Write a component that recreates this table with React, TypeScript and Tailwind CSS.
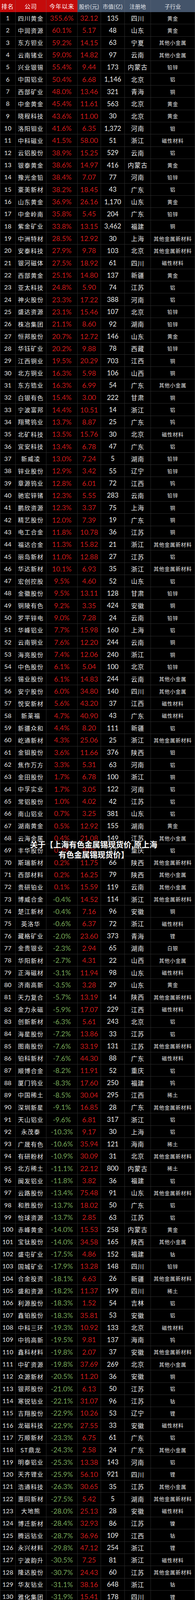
const rows = `四川黄金|355.6%|32.12|135|四川|黄金
中润资源|60.1%|5.17|48|山东|黄金
东方钽业|59.2%|14.15|63|宁夏|其他小金属
云南锗业|59.0%|14.82|97|云南|其他小金属
兴业银锡|55.4%|9.44|173|内蒙古|铅锌
中国铝业|50.4%|6.68|1,146|北京|铝
西部矿业|48.0%|13.46|321|青海|铜
中金黄金|45.4%|11.61|563|北京|黄金
晓程科技|43.6%|11.00|30|北京|黄金
洛阳钼业|41.6%|6.35|1,372|河南|钼
中科磁业|41.5%|58.00|51|浙江|磁性材料
云铝股份|38.9%|15.25|529|云南|铝
银泰黄金|38.6%|14.97|416|内蒙古|黄金
豫光金铅|38.4%|7.07|77|河南|铅锌
豪美新材|38.2%|18.45|43|广东|铝
山东黄金|36.9%|26.16|1,170|山东|黄金
中金岭南|35.8%|5.45|204|广东|铅锌
紫金矿业|33.8%|13.15|3,462|福建|铜
中洲特材|28.5%|12.92|30|上海|其他金属新材料
安泰科技|27.9%|9.78|103|北京|其他金属新材料
银河磁体|27.5%|18.92|61|四川|磁性材料
西部黄金|25.1%|14.80|137|新疆|黄金
亚太科技|24.8%|5.90|74|江苏|铝
神火股份|23.3%|17.22|388|河南|铝
盛达资源|23.1%|15.46|107|北京|铅锌
株冶集团|21.1%|8.60|92|湖南|铅锌
恒邦股份|20.7%|12.72|146|山东|黄金
华钰矿业|20.2%|9.88|78|西藏|铅锌
江西铜业|19.5%|20.29|703|江西|铜
北方铜业|16.3%|5.98|106|山西|铜
东方锆业|16.3%|6.99|54|广东|其他小金属
白银有色|15.4%|3.00|222|甘肃|铜
宁波富邦|14.4%|10.51|14|浙江|铝
翔鹭钨业|13.7%|8.87|25|广东|钨
北矿科技|13.5%|15.76|30|北京|磁性材料
宜安科技|13.4%|6.78|47|广东|铝
新威凌|13.0%|7.24|5|湖南|铅锌
锌业股份|12.9%|3.42|55|辽宁|铅锌
章源钨业|12.8%|6.01|72|江西|钨
驰宏锌锗|12.3%|5.55|283|云南|铅锌
鹏欣资源|12.3%|3.37|75|上海|铜
精艺股份|12.0%|7.39|19|广东|铜
电工合金|11.8%|10.78|36|江苏|铜
福达合金|11.3%|15.82|21|浙江|其他金属新材料
丽岛新材|11.0%|12.88|27|江苏|铝
华达新材|10.1%|6.93|35|浙江|其他金属新材料
宏创控股|9.5%|4.60|52|山东|铝
金徽股份|9.5%|13.11|128|甘肃|铅锌
铜陵有色|9.2%|3.35|424|安徽|铜
罗平锌电|9.0%|7.28|24|云南|铅锌
华峰铝业|7.7%|15.98|160|上海|铝
云南铜业|7.6%|12.20|244|云南|铜
海亮股份|7.4%|12.06|240|浙江|铜
中色股份|6.1%|5.04|100|北京|铅锌
锡业股份|6.1%|14.83|244|云南|其他小金属
安宁股份|6.0%|34.80|140|四川|其他小金属
悦安新材|5.6%|43.20|37|江西|磁性材料
新莱福|4.7%|40.90|43|广东|磁性材料
新疆众和|4.4%|8.20|111|新疆|铝
屹通新材|4.3%|25.06|25|浙江|其他金属新材料
金钼股份|3.6%|11.66|376|陕西|钼
焦作万方|3.3%|5.31|63|河南|铝
金田股份|1.7%|6.78|100|浙江|铜
中孚实业|1.7%|3.05|122|河南|铝
常铝股份|1.0%|4.02|42|江苏|铝
南山铝业|0.7%|3.25|381|山东|铝
湖南黄金|0.5%|12.92|155|湖南|黄金
云海金属|0.4%|21.08|149|江苏|其他小金属
丰华股份|0.3%|8.05|17|重庆|铝
斯瑞新材|0.2%|11.75|66|陕西|其他金属新材料
西部材料|0.2%|16.25|79|陕西|其他小金属
贵研铂业|0.1%|15.59|119|云南|其他小金属
博威合金|-0.4%|14.52|114|浙江|其他金属新材料
楚江新材|-0.4%|7.16|96|安徽|铜
英洛华|-0.6%|6.37|72|浙江|磁性材料
藏格矿业|-2.0%|23.60|373|青海|锂
金贵银业|-2.3%|2.94|65|湖南|白银
华阳新材|-2.7%|4.31|22|山西|其他小金属
正海磁材|-3.1%|11.94|98|山东|磁性材料
济南高新|-3.5%|3.28|29|山东|黄金
天力复合|-5.7%|13.19|14|陕西|其他金属新材料
金力永磁|-5.9%|17.07|229|江西|磁性材料
创新新材|-6.3%|5.61|243|北京|铝
海星股份|-7.2%|13.86|33|江苏|铝
图南股份|-7.6%|33.19|131|江苏|其他金属新材料
铂科新材|-7.6%|44.30|88|广东|磁性材料
顺博合金|-8.2%|11.91|52|重庆|铝
厦门钨业|-8.3%|17.60|250|福建|钨
中国稀土|-8.5%|30.04|295|江西|稀土
深圳新星|-9.1%|16.85|28|广东|其他金属新材料
天山铝业|-9.6%|6.81|317|浙江|铝
永茂泰|-10.3%|9.17|30|上海|铝
广晟有色|-10.6%|35.94|121|海南|稀土
有研粉材|-10.9%|30.09|31|北京|其他金属新材料
北方稀土|-11.1%|22.12|800|内蒙古|稀土
闽发铝业|-11.8%|3.82|36|福建|铝
云路股份|-13.4%|75.48|91|山东|其他金属新材料
和胜股份|-13.7%|18.02|50|广东|铝
怡球资源|-13.7%|2.85|63|江苏|铝
赤峰黄金|-14.0%|15.53|258|内蒙古|黄金
宝钛股份|-14.0%|34.58|165|陕西|其他小金属
盛屯矿业|-17.5%|4.86|152|福建|钴
国城矿业|-17.9%|13.28|148|四川|铅锌
合金投资|-18.1%|6.63|26|新疆|其他金属新材料
盛和资源|-18.2%|11.37|199|四川|稀土
利源股份|-18.3%|1.52|54|吉林|铝
鑫铂股份|-18.3%|35.81|53|安徽|铝
中科三环|-19.3%|10.92|133|北京|磁性材料
中钨高新|-19.5%|9.81|137|海南|钨
鑫科材料|-19.8%|2.07|37|安徽|其他金属新材料
中矿资源|-19.8%|37.69|269|北京|其他小金属
众源新材|-20.5%|11.20|36|安徽|铜
银邦股份|-21.0%|6.13|50|江苏|铝
寒锐钴业|-22.1%|31.07|96|江苏|钴
吉翔股份|-22.9%|10.26|53|辽宁|锂
龙磁科技|-22.9%|27.55|33|安徽|磁性材料
万顺新材|-23.3%|6.75|61|广东|铝
ST鼎龙|-24.3%|2.58|24|广东|其他小金属
明泰铝业|-25.3%|13.38|143|河南|铝
天齐锂业|-25.9%|56.10|921|四川|锂
浩通科技|-26.3%|30.65|35|江苏|其他小金属
惠同新材|-27.5%|5.42|5|湖南|其他金属新材料
大地熊|-28.0%|25.13|28|安徽|磁性材料
博迁新材|-28.4%|32.93|86|江苏|镍
腾远钴业|-28.7%|36.96|109|江西|钴
永兴材料|-29.8%|47.12|254|浙江|锂
宁波韵升|-30.5%|7.25|81|浙江|磁性材料
隆达股份|-30.7%|24.43|60|江苏|其他金属新材料
华友钴业|-31.1%|38.16|648|浙江|钴
雅化集团|-31.9%|15.41|178|四川|锂
赣锋锂业|-33.5%|45.50|918|江西|锂
鼎胜新材|-34.2%|14.62|129|江苏|铝
西藏珠峰|-35.3%|14.84|136|西藏|铅锌
西藏矿业|-35.9%|24.73|129|西藏|锂
天华新能|-37.0%|25.97|218|江苏|锂
盛新锂能|-39.1%|22.39|206|四川|锂
融捷股份|-47.6%|50.65|132|广东|锂
江特电机|-48.4%|9.00|154|江西|锂`
  .split("\n")
  .map(line => line.split("|"));

const cjk = "font-['Noto_Sans_CJK_SC','Noto_Sans',sans-serif]";
const num = "font-['Lato','Liberation_Sans',sans-serif]";
const cell =
  "min-h-0 flex items-center justify-center border-r border-b border-[#2a2a2a] whitespace-nowrap overflow-hidden leading-none";

const headers = [
  { label: "排名", red: true },
  { label: "公司", red: true },
  { label: "今年以来", red: true },
  { label: "股价(元)", red: false },
  { label: "市值(亿)", red: false },
  { label: "注册地", red: false },
  { label: "子行业", red: false },
];

export default function App() {
  return (
    <div className="relative w-[500px] h-[4354px] overflow-hidden bg-black">
      <div className="grid h-[4354px] grid-cols-[40px_79px_80px_60px_61px_67px_113px] grid-rows-[31px_repeat(138,minmax(0,1fr))]">
        {headers.map(h => (
          <div
            key={h.label}
            className={`min-h-0 flex items-center justify-center whitespace-nowrap overflow-hidden leading-none border-r border-[#6b7280]/40 ${cjk} ${
              h.red
                ? "bg-[#c40b0b] text-white text-[15px] tracking-[1px]"
                : "bg-[#44546a] text-[#e3e6ea] text-[14px]"
            }`}
          >
            {h.label}
          </div>
        ))}

        {rows.map(([name, pct, price, cap, loc, ind], i) => {
          const down = pct.startsWith("-");
          return [
            <div key={`a${i}`} className={`${cell} border-l text-[16px] text-[#e6e6e6] ${num}`}>
              {i + 1}
            </div>,
            <div key={`b${i}`} className={`${cell} text-[15px] tracking-[1.5px] text-[#ececec] ${cjk}`}>
              {name}
            </div>,
            <div
              key={`c${i}`}
              className={`${cell} text-[18px] ${num} ${down ? "text-[#76a85a]" : "text-[#d11a1a]"}`}
            >
              {pct}
            </div>,
            <div key={`d${i}`} className={`${cell} text-[18px] text-[#d11a1a] ${num}`}>
              {price}
            </div>,
            <div key={`e${i}`} className={`${cell} text-[17px] text-[#ececec] ${num}`}>
              {cap}
            </div>,
            <div key={`f${i}`} className={`${cell} text-[16px] tracking-[1px] text-[#ececec] ${cjk}`}>
              {loc}
            </div>,
            <div key={`g${i}`} className={`${cell} text-[13px] tracking-[1px] text-[#e6e6e6] ${cjk}`}>
              {ind}
            </div>,
          ];
        })}
      </div>

      <div
        className={`absolute left-0 right-0 top-[2149px] pr-[20px] text-center text-[20px] leading-[26px] font-bold text-white ${cjk} [text-shadow:0_0_3px_#000,0_0_6px_#000]`}
      >
        <div>关于【上海有色金属锡现货价,原上海</div>
        <div>有色金属锡现货价】</div>
      </div>
    </div>
  );
}
